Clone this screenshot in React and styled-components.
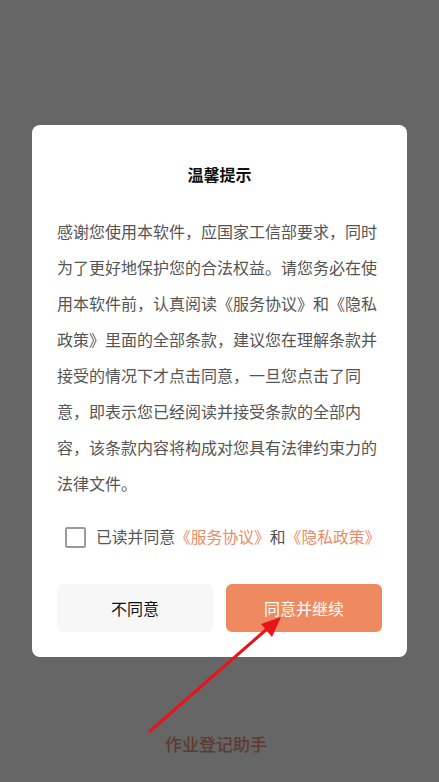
import React, { useState } from 'react'
import styled, { createGlobalStyle } from 'styled-components'

const GlobalStyle = createGlobalStyle`
  html, body {
    margin: 0;
    padding: 0;
    background: #666666;
  }
  body {
    font-family: "Noto Sans CJK SC", "Noto Sans", sans-serif;
  }
`

const Page = styled.div`
  position: relative;
  width: 439px;
  height: 782px;
  background: #666666;
  padding-top: 125px;
  box-sizing: border-box;
  overflow: hidden;
`

const Dialog = styled.div`
  margin: 0 32px;
  background: #fff;
  border-radius: 8px;
  padding: 36px 25px 25px;
  box-sizing: border-box;
`

const Title = styled.h2`
  margin: 0;
  text-align: center;
  font-size: 16px;
  font-weight: 700;
  line-height: 26px;
  color: #111;
`

const Body = styled.p`
  margin: 26px 0 0;
  font-size: 16px;
  line-height: 36px;
  color: #555;
`

const AgreeRow = styled.label`
  display: flex;
  align-items: center;
  gap: 10px;
  margin: 18px 0 0 8px;
  font-size: 15.8px;
  color: #555;
  line-height: 36px;
  white-space: nowrap;
`

const Box = styled.span`
  width: 17px;
  height: 17px;
  border: 2px solid #9a9a9a;
  border-radius: 2px;
  flex: none;
`

const Link = styled.span`
  color: #e98b69;
`

const Buttons = styled.div`
  display: grid;
  grid-template-columns: 1fr 1fr;
  gap: 13px;
  margin-top: 29px;
`

const Button = styled.button`
  height: 48px;
  border: none;
  border-radius: 6px;
  font-family: inherit;
  font-size: 16px;
  background: ${p => (p.primary ? '#ef8a60' : '#f7f7f7')};
  color: ${p => (p.primary ? '#fff' : '#111')};
`

const Caption = styled.div`
  margin: 74px 0 0 165px;
  font-size: 17px;
  font-weight: 500;
  color: #5e3a31;
`

const Arrow = styled.svg`
  position: absolute;
  left: 0;
  top: 0;
  pointer-events: none;
`

export default function App() {
  const [checked, setChecked] = useState(false)
  return (
    <>
      <GlobalStyle />
      <Page>
        <Dialog>
          <Title>温馨提示</Title>
          <Body>
            感谢您使用本软件，应国家工信部要求，同时为了更好地保护您的合法权益。请您务必在使用本软件前，认真阅读《服务协议》和《隐私政策》里面的全部条款，建议您在理解条款并接受的情况下才点击同意，一旦您点击了同意，即表示您已经阅读并接受条款的全部内容，该条款内容将构成对您具有法律约束力的法律文件。
          </Body>
          <AgreeRow onClick={() => setChecked(!checked)}>
            <Box />
            <span>
              已读并同意<Link>《服务协议》</Link>和<Link>《隐私政策》</Link>
            </span>
          </AgreeRow>
          <Buttons>
            <Button>不同意</Button>
            <Button primary>同意并继续</Button>
          </Buttons>
        </Dialog>
        <Caption>作业登记助手</Caption>
        <Arrow width="439" height="782" viewBox="0 0 439 782">
          <line x1="149" y1="732" x2="268" y2="628" stroke="#e8141a" strokeWidth="3" />
          <polygon points="281,617 272,637 261,624" fill="#e8141a" />
        </Arrow>
      </Page>
    </>
  )
}
